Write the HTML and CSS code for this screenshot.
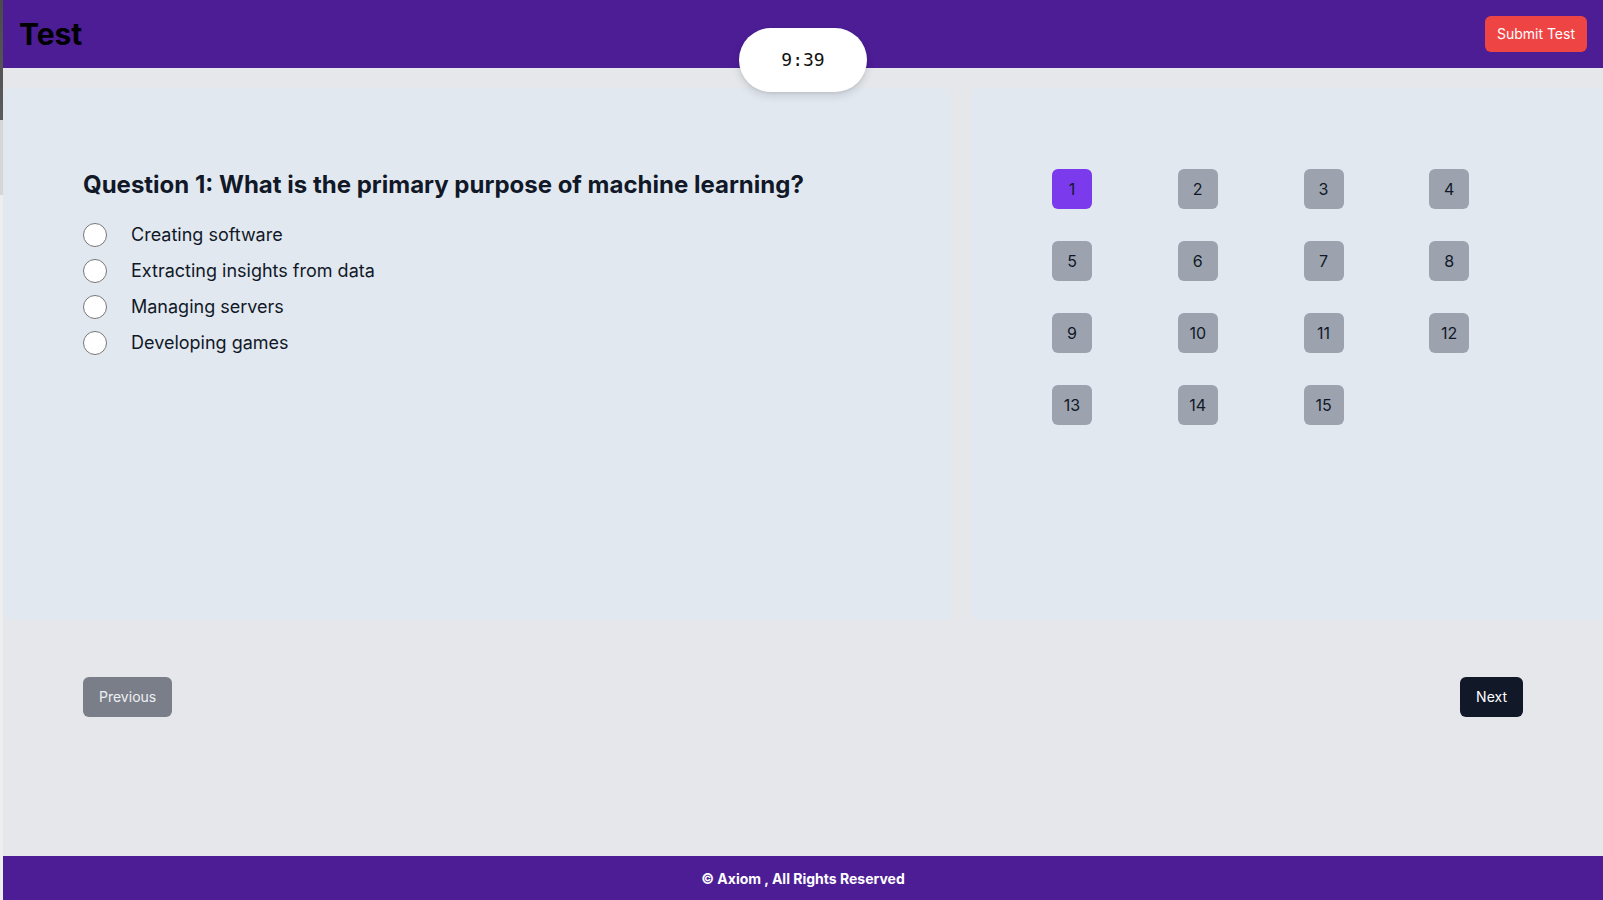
FILE: index.html
```html
<!DOCTYPE html>
<html lang="en">
<head>
<meta charset="utf-8">
<title>Test</title>
<link rel="stylesheet" href="styles.css">
</head>
<body>
<div class="frame">
  <div class="edge"></div>
  <div class="app">
    <header class="topbar">
      <h1 class="title">Test</h1>
      <div class="timer">9:39</div>
      <button class="btn btn-submit">Submit Test</button>
    </header>

    <main class="main">
      <div class="panels">
        <section class="panel panel-question">
          <h2 class="question">Question 1: What is the primary purpose of machine learning?</h2>
          <ul class="options">
            <li class="option"><span class="radio"></span><span class="option-text">Creating software</span></li>
            <li class="option"><span class="radio"></span><span class="option-text">Extracting insights from data</span></li>
            <li class="option"><span class="radio"></span><span class="option-text">Managing servers</span></li>
            <li class="option"><span class="radio"></span><span class="option-text">Developing games</span></li>
          </ul>
        </section>
        <aside class="panel panel-nav">
          <div class="qgrid">
            <button class="qbtn active">1</button>
            <button class="qbtn">2</button>
            <button class="qbtn">3</button>
            <button class="qbtn">4</button>
            <button class="qbtn">5</button>
            <button class="qbtn">6</button>
            <button class="qbtn">7</button>
            <button class="qbtn">8</button>
            <button class="qbtn">9</button>
            <button class="qbtn">10</button>
            <button class="qbtn">11</button>
            <button class="qbtn">12</button>
            <button class="qbtn">13</button>
            <button class="qbtn">14</button>
            <button class="qbtn">15</button>
          </div>
        </aside>
      </div>

      <div class="pager">
        <button class="btn btn-prev">Previous</button>
        <button class="btn btn-next">Next</button>
      </div>
    </main>

    <footer class="footer">© Axiom , All Rights Reserved</footer>
  </div>
</div>
</body>
</html>
```

FILE: styles.css
```css
* { box-sizing: border-box; }

html, body {
  margin: 0;
  padding: 0;
}

body {
  font-family: Inter, "Noto Sans", "Liberation Sans", sans-serif;
  color: #111827;
  background: #e5e7eb;
}

.frame {
  display: flex;
  width: 1603px;
  height: 900px;
  overflow: hidden;
}

.edge {
  width: 3px;
  flex: none;
  background: linear-gradient(to bottom, #4a4a4a 0, #5c5c5c 120px, #d6d6d6 120px, #d6d6d6 195px, #eeeeee 195px, #eeeeee 100%);
}

.app {
  position: relative;
  width: 1600px;
  height: 900px;
  display: flex;
  flex-direction: column;
  background: #e5e7eb;
}

.topbar {
  height: 68px;
  flex: none;
  background: #4c1d95;
  display: flex;
  align-items: center;
  justify-content: space-between;
  padding: 0 16px 0 16px;
}

.title {
  margin: 0;
  font-size: 30px;
  line-height: 36px;
  font-weight: 700;
  color: #000;
}

.timer {
  position: absolute;
  top: 28px;
  left: 50%;
  transform: translateX(-50%);
  width: 128px;
  height: 64px;
  border-radius: 9999px;
  background: #fff;
  box-shadow: 0 4px 8px rgba(0, 0, 0, 0.12), 0 1px 3px rgba(0, 0, 0, 0.08);
  display: flex;
  align-items: center;
  justify-content: center;
  padding-bottom: 1px;
  font-family: "DejaVu Sans Mono", "Liberation Mono", monospace;
  font-size: 18px;
  color: #111;
  z-index: 2;
}

.btn {
  border: none;
  font-family: inherit;
  font-size: 14px;
  line-height: 20px;
  border-radius: 6px;
  cursor: pointer;
}

.btn-submit {
  background: #ef4444;
  color: #fff;
  padding: 8px 12px;
}

.main {
  flex: 1;
  padding-top: 20px;
  display: flex;
  flex-direction: column;
}

.panels {
  display: grid;
  grid-template-columns: 3fr 2fr;
  gap: 20px;
  height: 532px;
}

.panel {
  background: #e2e8f0;
  border-radius: 8px;
  padding: 80px;
  box-shadow: 0 0 3px rgba(0, 0, 0, 0.02);
  min-width: 0;
}

.panel-question {
  padding-top: 81px;
}

.panel-nav {
  padding-top: 81px;
  padding-left: 81px;
}

.question {
  margin: 0 0 16px;
  font-size: 24px;
  line-height: 32px;
  font-weight: 700;
  color: #111827;
}

.options {
  list-style: none;
  margin: 0;
  padding: 0;
}

.option {
  height: 36px;
  display: flex;
  align-items: center;
  gap: 24px;
}

.radio {
  width: 24px;
  height: 24px;
  flex: none;
  border-radius: 50%;
  background: #fff;
  border: 1px solid #767676;
}

.option-text {
  font-size: 18px;
  line-height: 28px;
  color: #111827;
}

.qgrid {
  display: grid;
  grid-template-columns: repeat(4, 1fr);
  gap: 32px;
  justify-items: start;
}

.qbtn {
  width: 40px;
  height: 40px;
  border: none;
  border-radius: 6px;
  background: #9ca3af;
  color: #111827;
  font-family: inherit;
  font-size: 16px;
  padding: 0;
}

.qbtn.active {
  background: #7c3aed;
}

.pager {
  display: flex;
  justify-content: space-between;
  padding: 0 80px;
  margin-top: 57px;
}

.btn-prev {
  background: #7a7e89;
  color: #eef0f3;
  padding: 10px 16px;
}

.btn-next {
  background: #111827;
  color: #fff;
  padding: 10px 16px;
}

.footer {
  height: 44px;
  flex: none;
  background: #4c1d95;
  color: #fff;
  font-size: 14px;
  font-weight: 700;
  display: flex;
  align-items: center;
  justify-content: center;
}
```
